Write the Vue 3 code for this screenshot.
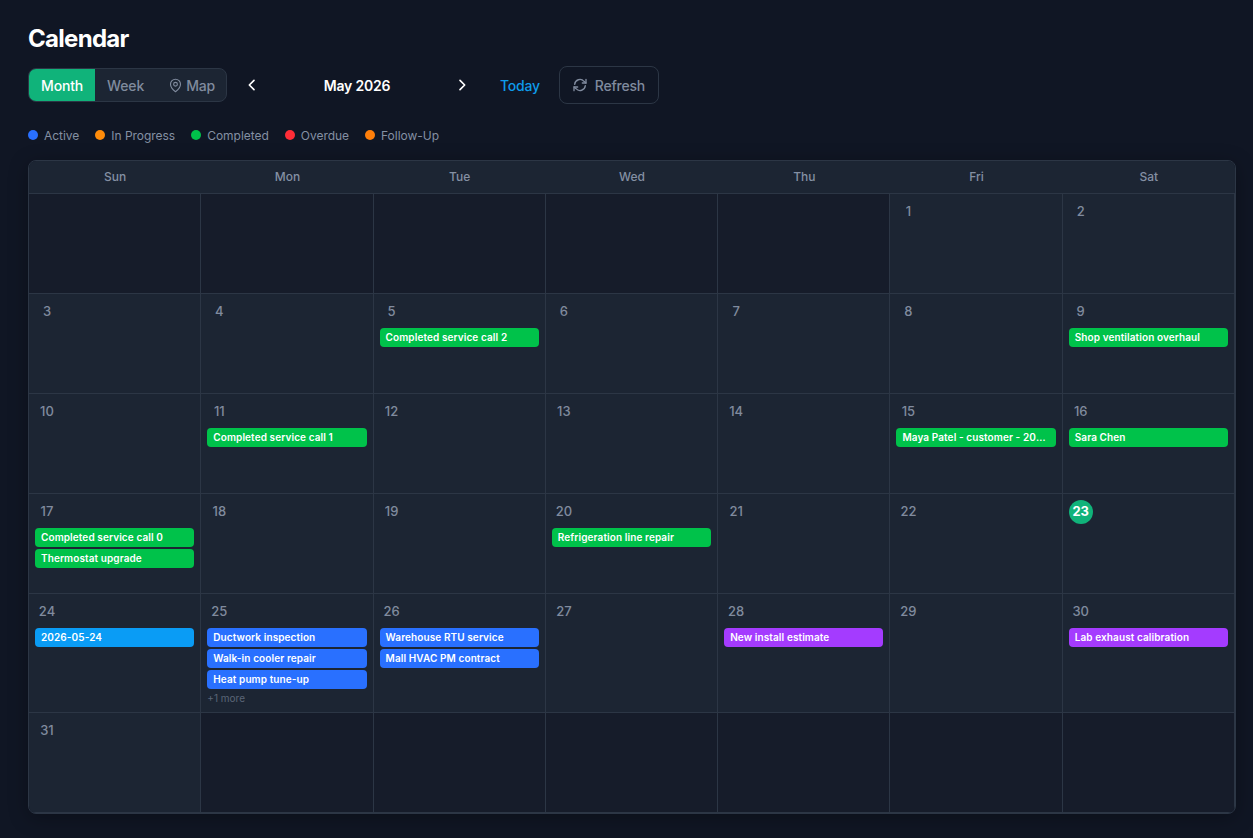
<template>
  <div class="page">
    <h1 class="title">Calendar</h1>

    <div class="toolbar">
      <div class="tabs">
        <button class="tab active">Month</button>
        <button class="tab">Week</button>
        <button class="tab map-tab">
          <svg width="15" height="15" viewBox="0 0 24 24" fill="none" stroke="currentColor" stroke-width="1.8" stroke-linecap="round" stroke-linejoin="round">
            <path d="M20 10c0 6-8 12-8 12s-8-6-8-12a8 8 0 0 1 16 0Z" />
            <circle cx="12" cy="10" r="3" />
          </svg>
          Map
        </button>
      </div>

      <button class="nav-btn prev">
        <svg width="16" height="16" viewBox="0 0 24 24" fill="none" stroke="currentColor" stroke-width="2.5" stroke-linecap="round" stroke-linejoin="round">
          <path d="M15 5l-7 7 7 7" />
        </svg>
      </button>
      <div class="month-label">May 2026</div>
      <button class="nav-btn next">
        <svg width="16" height="16" viewBox="0 0 24 24" fill="none" stroke="currentColor" stroke-width="2.5" stroke-linecap="round" stroke-linejoin="round">
          <path d="M9 5l7 7-7 7" />
        </svg>
      </button>

      <button class="today-btn">Today</button>
      <button class="refresh-btn">
        <svg width="16" height="16" viewBox="0 0 24 24" fill="none" stroke="currentColor" stroke-width="2" stroke-linecap="round" stroke-linejoin="round">
          <path d="M4 11a8 8 0 0 1 14-4.5L21 9" />
          <path d="M21 3.5V9h-5.5" />
          <path d="M20 13a8 8 0 0 1-14 4.5L3 15" />
          <path d="M3 20.5V15h5.5" />
        </svg>
        Refresh
      </button>
    </div>

    <div class="legend">
      <div v-for="item in legend" :key="item.label" class="legend-item">
        <span class="dot" :style="{ background: item.color }"></span>
        {{ item.label }}
      </div>
    </div>

    <div class="calendar">
      <div v-for="name in weekdays" :key="name" class="weekday">{{ name }}</div>
      <div v-for="(cell, i) in cells" :key="i" class="cell" :class="{ outside: !cell.day }">
        <template v-if="cell.day">
          <div class="day-num" :class="{ today: cell.day === 23 }">{{ cell.day }}</div>
          <div v-for="ev in cell.events" :key="ev.title" class="event" :style="{ background: colors[ev.type] }">
            {{ ev.title }}
          </div>
          <div v-if="cell.more" class="more">+{{ cell.more }} more</div>
        </template>
      </div>
    </div>
  </div>
</template>

<script setup>
import { computed } from 'vue'

const weekdays = ['Sun', 'Mon', 'Tue', 'Wed', 'Thu', 'Fri', 'Sat']

const colors = {
  completed: '#00c24a',
  active: '#2970ff',
  info: '#0a9cf5',
  estimate: '#a43bff'
}

const legend = [
  { label: 'Active', color: '#2970ff' },
  { label: 'In Progress', color: '#ff8c0a' },
  { label: 'Completed', color: '#00c24a' },
  { label: 'Overdue', color: '#ff2d37' },
  { label: 'Follow-Up', color: '#ff7f0a' }
]

const eventsByDay = {
  5: [{ title: 'Completed service call 2', type: 'completed' }],
  9: [{ title: 'Shop ventilation overhaul', type: 'completed' }],
  11: [{ title: 'Completed service call 1', type: 'completed' }],
  15: [{ title: 'Maya Patel - customer - 2026-05-15', type: 'completed' }],
  16: [{ title: 'Sara Chen', type: 'completed' }],
  17: [
    { title: 'Completed service call 0', type: 'completed' },
    { title: 'Thermostat upgrade', type: 'completed' }
  ],
  20: [{ title: 'Refrigeration line repair', type: 'completed' }],
  24: [{ title: '2026-05-24', type: 'info' }],
  25: [
    { title: 'Ductwork inspection', type: 'active' },
    { title: 'Walk-in cooler repair', type: 'active' },
    { title: 'Heat pump tune-up', type: 'active' }
  ],
  26: [
    { title: 'Warehouse RTU service', type: 'active' },
    { title: 'Mall HVAC PM contract', type: 'active' }
  ],
  28: [{ title: 'New install estimate', type: 'estimate' }],
  30: [{ title: 'Lab exhaust calibration', type: 'estimate' }]
}

const cells = computed(() => {
  const list = []
  for (let i = 0; i < 5; i++) list.push({ day: null })
  for (let d = 1; d <= 31; d++) {
    list.push({ day: d, events: eventsByDay[d] || [], more: d === 25 ? 1 : 0 })
  }
  while (list.length < 42) list.push({ day: null })
  return list
})
</script>

<style>
html, body {
  margin: 0;
  background: #101624;
}
</style>

<style scoped>
.page {
  box-sizing: border-box;
  min-height: 838px;
  padding: 24px 17px 25px 28px;
  background: #101624;
  font-family: Inter, "Noto Sans", sans-serif;
  color: #fff;
}

.title {
  margin: 0 0 12px;
  font-size: 24px;
  line-height: 30px;
  font-weight: 700;
  letter-spacing: -0.7px;
}

.toolbar {
  display: flex;
  align-items: center;
  height: 38px;
}

button {
  font-family: inherit;
  border: none;
  background: none;
  padding: 0;
  cursor: pointer;
}

.tabs {
  display: flex;
  width: 199px;
  height: 34px;
  box-sizing: border-box;
  border: 1px solid #2c3645;
  border-radius: 8px;
  background: #1c2533;
  overflow: hidden;
}

.tab {
  display: flex;
  align-items: center;
  justify-content: center;
  gap: 3px;
  padding: 0 12px;
  font-size: 14px;
  font-weight: 500;
  letter-spacing: -0.15px;
  color: #808b9e;
}

.tab.active {
  background: #10b37a;
  color: #fff;
}

.nav-btn {
  display: flex;
  align-items: center;
  justify-content: center;
  width: 32px;
  height: 32px;
  color: #fff;
}

.prev {
  margin-left: 9px;
}

.month-label {
  width: 178px;
  text-align: center;
  font-size: 14px;
  font-weight: 600;
  letter-spacing: -0.2px;
}

.today-btn {
  margin-left: 22px;
  font-size: 14px;
  font-weight: 500;
  letter-spacing: -0.25px;
  color: #0e9bea;
}

.refresh-btn {
  display: flex;
  align-items: center;
  gap: 7px;
  box-sizing: border-box;
  height: 38px;
  margin-left: 19px;
  padding: 0 13px 0 12px;
  border: 1px solid #2c3645;
  border-radius: 8px;
  font-size: 14px;
  font-weight: 500;
  letter-spacing: -0.2px;
  color: #808b9e;
}

.legend {
  display: flex;
  gap: 16px;
  margin-top: 23px;
  height: 16px;
}

.legend-item {
  display: flex;
  align-items: center;
  gap: 6px;
  font-size: 12px;
  letter-spacing: -0.03px;
  color: #8490a3;
}

.dot {
  width: 10px;
  height: 10px;
  border-radius: 50%;
}

.calendar {
  display: grid;
  grid-template-columns: repeat(7, minmax(0, 1fr));
  margin-top: 17px;
  border: 1px solid #2c3645;
  border-radius: 8px;
  overflow: hidden;
  box-shadow: 0 4px 20px rgba(0, 0, 0, 0.3);
}

.weekday {
  height: 33px;
  line-height: 31px;
  box-sizing: border-box;
  text-align: center;
  font-size: 12px;
  font-weight: 500;
  color: #8490a3;
  background: #1c2533;
  border-bottom: 1px solid #2c3645;
}

.cell {
  box-sizing: border-box;
  min-height: 100px;
  padding: 6px;
  background: #1c2533;
  border-right: 1px solid #2c3645;
  border-bottom: 1px solid #2c3645;
}

.cell.outside {
  background: #161c2a;
}

.day-num {
  width: 24px;
  height: 24px;
  margin-bottom: 4px;
  line-height: 23px;
  text-align: center;
  border-radius: 50%;
  font-size: 13px;
  font-weight: 500;
  color: #808b9e;
}

.day-num.today {
  background: #10b37a;
  color: #fff;
  font-weight: 700;
}

.event {
  height: 19px;
  margin-bottom: 2px;
  padding: 0 6px;
  line-height: 19px;
  border-radius: 4px;
  font-size: 10px;
  font-weight: 600;
  letter-spacing: 0.1px;
  color: #fff;
  white-space: nowrap;
  overflow: hidden;
  text-overflow: ellipsis;
}

.more {
  height: 15px;
  line-height: 15px;
  font-size: 10px;
  color: #5b6577;
}
</style>
